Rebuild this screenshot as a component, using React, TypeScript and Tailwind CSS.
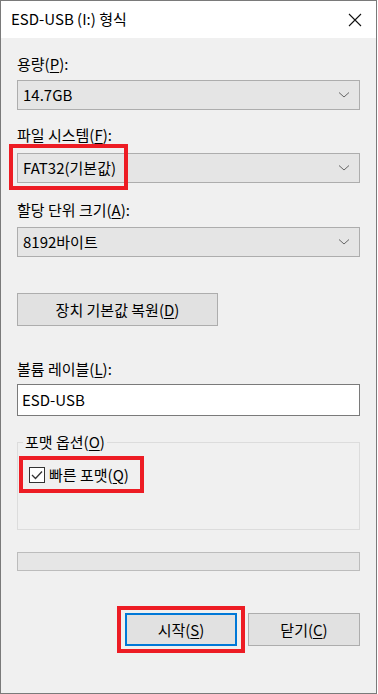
import React from "react";

const font = { fontFamily: '"Noto Sans CJK KR", "Noto Sans", sans-serif' };

function Chevron() {
  return (
    <svg width="12" height="8" viewBox="0 0 12 8" className="shrink-0">
      <path d="M1 1.5 L6 6 L11 1.5" fill="none" stroke="#666" strokeWidth="1" />
    </svg>
  );
}

function Combo({ text }: { text: string }) {
  return (
    <div className="flex h-[30px] items-center justify-between border border-[#adadad] bg-[#e5e5e5] pl-[5px] pr-[9px] text-[15px] text-black">
      <span>{text}</span>
      <Chevron />
    </div>
  );
}

function U({ c }: { c: string }) {
  return <span className="underline underline-offset-2">{c}</span>;
}

export default function App() {
  return (
    <div
      className="flex h-[694px] w-[378px] flex-col border-r border-r-white bg-white text-black"
      style={font}
    >
      <div className="flex h-[694px] w-[377px] flex-col border border-[#7a7a7a]">
        <div className="flex h-[37px] shrink-0 items-center justify-between bg-white pl-[10px] pr-[14px] text-[15px]">
          <span>ESD-USB (I:) 형식</span>
          <svg width="14" height="14" viewBox="0 0 14 14">
            <path d="M1 1 L13 13 M13 1 L1 13" stroke="#111" strokeWidth="1.1" />
          </svg>
        </div>
        <div className="flex flex-1 flex-col bg-[#f0f0f0] px-[16px] text-[15px] leading-[20px]">
          <div className="mt-[16px] h-[20px]">
            용량(<U c="P" />):
          </div>
          <div className="mt-[6px]">
            <Combo text="14.7GB" />
          </div>
          <div className="mt-[15px] h-[20px]">
            파일 시스템(<U c="F" />):
          </div>
          <div className="relative mt-[8px]">
            <Combo text="FAT32(기본값)" />
            <div className="pointer-events-none absolute left-[-8px] top-[-9px] h-[46px] w-[119px] border-[4px] border-[#ed1c24]" />
          </div>
          <div className="mt-[17px] h-[20px]">
            할당 단위 크기(<U c="A" />):
          </div>
          <div className="mt-[7px]">
            <Combo text="8192바이트" />
          </div>
          <div className="mt-[36px] flex h-[33px] w-[201px] items-center justify-center border border-[#adadad] bg-[#e1e1e1]">
            장치 기본값 복원(<U c="D" />)
          </div>
          <div className="mt-[33px] h-[20px]">
            볼륨 레이블(<U c="L" />):
          </div>
          <div className="mt-[5px] flex h-[32px] items-center border border-[#7a7a7a] bg-white pl-[4px]">
            ESD-USB
          </div>
          <div className="relative mt-[26px] h-[88px] border border-[#dcdcdc]">
            <div className="absolute left-[5px] top-[-11px] bg-[#f0f0f0] px-[2px]">
              포맷 옵션(<U c="O" />)
            </div>
            <div className="relative ml-[1px] mt-[13px] flex h-[37px] w-[125px] items-center border-[4px] border-[#ed1c24] pl-[6px]">
              <div className="flex h-[16px] w-[16px] items-center justify-center border border-[#333] bg-white">
                <svg width="12" height="10" viewBox="0 0 12 10">
                  <path d="M1 5 L4.5 8.5 L11 1.5" fill="none" stroke="#333" strokeWidth="1.3" />
                </svg>
              </div>
              <span className="ml-[4px]">
                빠른 포맷(<U c="Q" />)
              </span>
            </div>
          </div>
          <div className="mt-[22px] h-[19px] border border-[#bcbcbc] bg-[#e6e6e6]" />
          <div className="mt-[42px] flex justify-end gap-[11px]">
            <div className="relative">
              <div className="flex h-[33px] w-[112px] items-center justify-center border-2 border-[#0078d7] bg-[#e1e1e1]">
                시작(<U c="S" />)
              </div>
              <div className="pointer-events-none absolute left-[-8px] top-[-7px] h-[47px] w-[128px] border-[4px] border-[#ed1c24]" />
            </div>
            <div className="flex h-[33px] w-[112px] items-center justify-center border border-[#adadad] bg-[#e1e1e1]">
              닫기(<U c="C" />)
            </div>
          </div>
        </div>
      </div>
    </div>
  );
}
